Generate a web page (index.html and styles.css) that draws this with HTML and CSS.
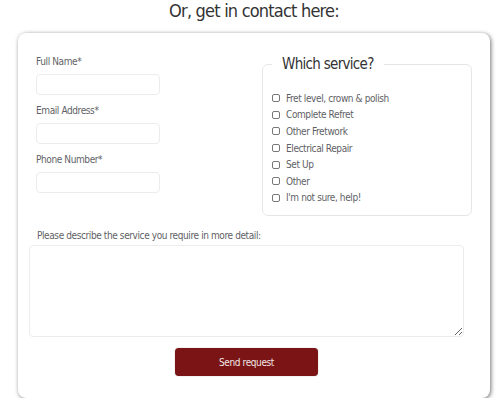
FILE: index.html
```html
<!DOCTYPE html>
<html>
<head>
<meta charset="utf-8">
<link rel="stylesheet" href="styles.css">
</head>
<body>
<div class="page">
  <h1 class="title">Or, get in contact here:</h1>
  <form class="card">
    <div class="top">
      <div class="fields">
        <label class="lbl">Full Name*</label>
        <input class="inp" type="text">
        <label class="lbl">Email Address*</label>
        <input class="inp" type="text">
        <label class="lbl">Phone Number*</label>
        <input class="inp" type="text">
      </div>
      <fieldset class="services">
        <legend class="legend">Which service?</legend>
        <ul class="list">
          <li class="item"><span class="box"></span>Fret level, crown &amp; polish</li>
          <li class="item"><span class="box"></span>Complete Refret</li>
          <li class="item"><span class="box"></span>Other Fretwork</li>
          <li class="item"><span class="box"></span>Electrical Repair</li>
          <li class="item"><span class="box"></span>Set Up</li>
          <li class="item"><span class="box"></span>Other</li>
          <li class="item"><span class="box"></span>I'm not sure, help!</li>
        </ul>
      </fieldset>
    </div>
    <div class="detail">
      <label class="lbl detail-lbl">Please describe the service you require in more detail:</label>
      <textarea class="area"></textarea>
      <div class="actions"><button class="btn" type="button">Send request</button></div>
    </div>
  </form>
</div>
</body>
</html>
```
FILE: styles.css
```css
html, body { margin: 0; padding: 0; background: #fff; }
body { font-family: "DejaVu Sans Condensed", "Liberation Sans", sans-serif; color: #5f5f66; }
.page { padding-left: 18px; width: 472px; }
.title { margin: 0 0 12px; height: 21px; line-height: 21px; font-size: 18px; letter-spacing: -0.8px; font-weight: normal; text-align: center; color: #333; }
.card { box-sizing: border-box; width: 472px; height: 365px; padding: 21px 18px 0 11px; background: #fff; border-radius: 8px; box-shadow: 1px 1px 4px rgba(0,0,0,0.55); }
.top { display: flex; justify-content: space-between; }
.fields { display: flex; flex-direction: column; align-items: flex-start; padding: 1px 0 0 7px; }
.lbl { display: block; font-size: 10px; letter-spacing: -0.4px; line-height: 14px; margin-bottom: 5px; }
.inp { box-sizing: border-box; width: 124px; height: 21px; margin: 0 0 9px; border: 1px solid #ececec; border-radius: 4px; background: #fff; }
.services { box-sizing: border-box; width: 210px; margin: 0; padding: 0 10px 9px 9px; border: 1px solid #e6e6e6; border-radius: 6px; }
.legend { padding: 0 10px; font-size: 15px; letter-spacing: -0.7px; line-height: 20px; color: #333; }
.list { list-style: none; margin: 16px 0 0; padding: 0; }
.item { display: flex; align-items: center; height: 16.6px; font-size: 10px; letter-spacing: -0.4px; }
.box { box-sizing: border-box; width: 8px; height: 8px; margin-right: 6px; border: 1px solid #777; border-radius: 2px; }
.detail { margin-top: 13px; }
.detail-lbl { margin: 0 0 2px 8px; }
.area { display: block; box-sizing: border-box; width: 435px; height: 92px; margin: 0; border: 1px solid #ececec; border-radius: 4px; }
.actions { display: flex; justify-content: center; width: 435px; margin-top: 11px; }
.btn { box-sizing: border-box; width: 143px; height: 28px; border: none; border-radius: 4px; background: #7b1414; color: #f2e6e6; font-family: inherit; font-size: 10px; letter-spacing: -0.4px; box-shadow: 0 0 1px rgba(0,0,0,0.5); }
```
